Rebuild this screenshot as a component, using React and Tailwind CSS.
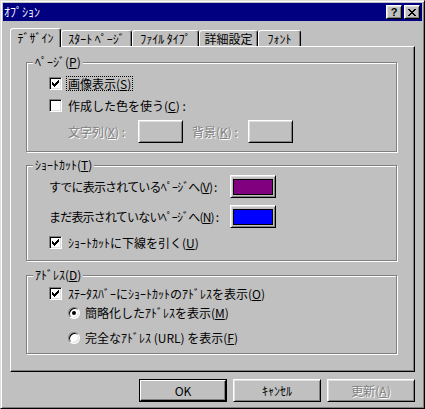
import React from 'react';

const raised = 'border border-t-white border-l-white border-r-black border-b-black shadow-[inset_1px_1px_0_#dfdfdf,inset_-1px_-1px_0_#808080] bg-[#c0c0c0]';
const disabledText = 'text-[#808080] [text-shadow:1px_1px_0_#fff]';

const Check = () => (
  <svg width="11" height="11" shapeRendering="crispEdges" className="block">
    <g fill="#000">
      <rect x="8" y="2" width="1" height="1" />
      <rect x="7" y="3" width="2" height="1" />
      <rect x="2" y="4" width="1" height="1" />
      <rect x="6" y="4" width="3" height="1" />
      <rect x="2" y="5" width="2" height="1" />
      <rect x="5" y="5" width="3" height="1" />
      <rect x="2" y="6" width="5" height="1" />
      <rect x="3" y="7" width="3" height="1" />
      <rect x="4" y="8" width="1" height="1" />
    </g>
  </svg>
);

const Checkbox = ({ checked }) => (
  <div className="w-[13px] h-[13px] shrink-0 bg-white border border-t-[#808080] border-l-[#808080] border-r-white border-b-white shadow-[inset_1px_1px_0_#000,inset_-1px_-1px_0_#dfdfdf]">
    {checked && <Check />}
  </div>
);

const Radio = ({ checked }) => (
  <div className="w-[12px] h-[12px] shrink-0 rounded-full bg-white border border-t-[#808080] border-l-[#808080] border-r-white border-b-white shadow-[inset_1px_1px_0_#000,inset_-1px_-1px_0_#dfdfdf] flex items-center justify-center">
    {checked && <div className="w-[4px] h-[4px] rounded-full bg-black" />}
  </div>
);

const Key = ({ k }) => <span className="underline underline-offset-1">{k}</span>;

const Group = ({ label, className, children }) => (
  <div className={`relative w-[371px] border border-[#808080] shadow-[1px_1px_0_#fff,inset_1px_1px_0_#fff] ${className}`}>
    <span className="absolute -top-[7px] left-[6px] px-[2px] bg-[#c0c0c0] leading-[12px] whitespace-nowrap">{label}</span>
    {children}
  </div>
);

const Swatch = ({ color }) => (
  <div className={`w-[46px] h-[23px] shrink-0 flex items-center justify-center ${raised}`}>
    <div className={`w-[40px] h-[16px] border border-black ${color}`} />
  </div>
);

const Tab = ({ label, width, selected }) => (
  <div
    className={`${width} flex justify-center border-t border-l border-r border-t-white border-l-white border-r-black shadow-[inset_-1px_0_0_#808080] rounded-t-[3px] bg-[#c0c0c0] whitespace-nowrap leading-[12px] ${
      selected ? 'h-[19px] -mb-[1px] relative z-10 pt-[3px]' : 'h-[16px] pt-[2px]'
    }`}
  >
    {label}
  </div>
);

export default function App() {
  return (
    <div className="w-[425px] h-[409px] bg-[#c0c0c0] border border-t-[#dfdfdf] border-l-[#dfdfdf] border-r-black border-b-black shadow-[inset_1px_1px_0_#fff,inset_-1px_-1px_0_#808080] p-[2px] font-['Noto_Sans_CJK_JP',sans-serif] text-[12px] leading-[12px] text-black overflow-hidden">
      {/* title bar */}
      <div className="h-[18px] bg-[#000080] flex items-center justify-between pl-[1px] pr-[2px]">
        <span className="text-white leading-[12px] whitespace-nowrap">ｵﾌﾟｼｮﾝ</span>
        <div className="flex gap-[2px]">
          <div className={`w-[16px] h-[14px] flex items-center justify-center ${raised}`}>
            <span className="font-['Liberation_Sans',sans-serif] font-bold text-[11px] leading-[11px]">?</span>
          </div>
          <div className={`w-[16px] h-[14px] flex items-center justify-center ${raised}`}>
            <svg width="8" height="7" shapeRendering="crispEdges" className="block">
              <g fill="#000">
                <rect x="0" y="0" width="2" height="1" />
                <rect x="6" y="0" width="2" height="1" />
                <rect x="1" y="1" width="2" height="1" />
                <rect x="5" y="1" width="2" height="1" />
                <rect x="2" y="2" width="4" height="1" />
                <rect x="3" y="3" width="2" height="1" />
                <rect x="2" y="4" width="4" height="1" />
                <rect x="1" y="5" width="2" height="1" />
                <rect x="5" y="5" width="2" height="1" />
                <rect x="0" y="6" width="2" height="1" />
                <rect x="6" y="6" width="2" height="1" />
              </g>
            </svg>
          </div>
        </div>
      </div>

      <div className="px-[7px]">
        {/* tabs */}
        <div className="mt-[7px] h-[18px] flex items-end">
          <Tab label="ﾃﾞｻﾞｲﾝ" width="w-[51px]" selected />
          <Tab label="ｽﾀｰﾄ ﾍﾟｰｼﾞ" width="w-[71px]" />
          <Tab label="ﾌｧｲﾙ ﾀｲﾌﾟ" width="w-[67px]" />
          <Tab label="詳細設定" width="w-[59px]" />
          <Tab label="ﾌｫﾝﾄ" width="w-[43px]" />
        </div>

        {/* tab panel */}
        <div className="h-[326px] border border-t-white border-l-white border-r-black border-b-black shadow-[inset_-1px_-1px_0_#808080] pt-[15px] pl-[15px]">
          <Group label={<>ﾍﾟｰｼﾞ(<Key k="P" />)</>} className="h-[90px] pt-[10px] pl-[22px]">
            <div className="h-[21px] flex items-center">
              <Checkbox checked />
              <span className="ml-[4px] px-[1px] border border-dotted border-black leading-[13px] whitespace-nowrap">画像表示(<Key k="S" />)</span>
            </div>
            <div className="mt-[1px] h-[21px] flex items-center">
              <Checkbox />
              <span className="ml-[4px] px-[1px] border border-transparent leading-[13px] whitespace-nowrap">作成した色を使う(<Key k="C" />) :</span>
            </div>
            <div className="mt-[4px] h-[23px] flex items-center">
              <span className={`ml-[19px] w-[70px] whitespace-nowrap ${disabledText}`}>文字列(<Key k="X" />) :</span>
              <div className={`w-[45px] h-[23px] ${raised}`} />
              <span className={`ml-[9px] w-[56px] whitespace-nowrap ${disabledText}`}>背景(<Key k="K" />) :</span>
              <div className={`w-[45px] h-[23px] ${raised}`} />
            </div>
          </Group>

          <Group label={<>ｼｮｰﾄｶｯﾄ(<Key k="T" />)</>} className="mt-[13px] h-[96px] pt-[9px] pl-[22px]">
            <div className="h-[23px] flex items-center">
              <span className="w-[181px] whitespace-nowrap tracking-[-0.8px]">すでに表示されているﾍﾟｰｼﾞへ(<Key k="V" />) :</span>
              <Swatch color="bg-[#800080]" />
            </div>
            <div className="mt-[7px] h-[23px] flex items-center">
              <span className="w-[181px] whitespace-nowrap tracking-[-0.8px]">まだ表示されていないﾍﾟｰｼﾞへ(<Key k="N" />) :</span>
              <Swatch color="bg-[#0000ff]" />
            </div>
            <div className="mt-[4px] h-[21px] flex items-center">
              <Checkbox checked />
              <span className="ml-[4px] px-[1px] border border-transparent leading-[13px] whitespace-nowrap">ｼｮｰﾄｶｯﾄに下線を引く(<Key k="U" />)</span>
            </div>
          </Group>

          <Group label={<>ｱﾄﾞﾚｽ(<Key k="D" />)</>} className="mt-[14px] h-[79px] pt-[7px] pl-[22px]">
            <div className="h-[21px] flex items-center">
              <Checkbox checked />
              <span className="ml-[4px] px-[1px] border border-transparent leading-[13px] whitespace-nowrap">ｽﾃｰﾀｽﾊﾞｰにｼｮｰﾄｶｯﾄのｱﾄﾞﾚｽを表示(<Key k="O" />)</span>
            </div>
            <div className="h-[18px] flex items-center pl-[19px]">
              <Radio checked />
              <span className="ml-[5px] whitespace-nowrap">簡略化したｱﾄﾞﾚｽを表示(<Key k="M" />)</span>
            </div>
            <div className="mt-[7px] h-[18px] flex items-center pl-[19px]">
              <Radio />
              <span className="ml-[5px] whitespace-nowrap">完全なｱﾄﾞﾚｽ (URL) を表示(<Key k="F" />)</span>
            </div>
          </Group>
        </div>

        {/* dialog buttons */}
        <div className="mt-[7px] flex justify-end gap-[6px]">
          <div className="w-[88px] h-[23px] border border-black">
            <div className="h-full flex items-center justify-center border border-t-white border-l-white border-r-black border-b-black shadow-[inset_-1px_-1px_0_#808080]">
              OK
            </div>
          </div>
          <div className={`w-[88px] h-[23px] flex items-center justify-center ${raised}`}>ｷｬﾝｾﾙ</div>
          <div className={`w-[88px] h-[23px] flex items-center justify-center ${raised} ${disabledText}`}>
            更新(<Key k="A" />)
          </div>
        </div>
      </div>
    </div>
  );
}
